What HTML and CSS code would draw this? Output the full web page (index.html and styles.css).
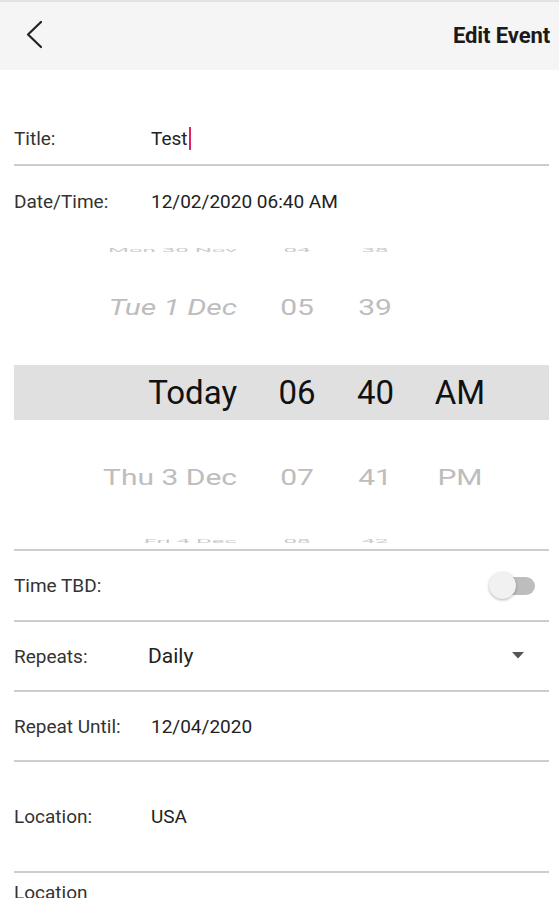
FILE: index.html
```html
<!DOCTYPE html>
<html lang="en">
<head>
<meta charset="utf-8">
<title>Edit Event</title>
<link rel="stylesheet" href="styles.css">
</head>
<body>
<div class="app">
  <header class="topbar">
    <svg class="back" width="20" height="30" viewBox="0 0 20 30" aria-hidden="true">
      <polyline points="16,2 3,14.5 16,27" fill="none" stroke="#222" stroke-width="2.2" stroke-linecap="round" stroke-linejoin="round"/>
    </svg>
    <h1 class="title">Edit Event</h1>
  </header>

  <main class="form">
    <div class="row row-title">
      <span class="label">Title:</span>
      <span class="value">Test<span class="caret"></span></span>
    </div>

    <div class="row row-date">
      <span class="label">Date/Time:</span>
      <span class="value">12/02/2020 06:40 AM</span>
    </div>

    <div class="wheel">
      <div class="wrow far far-top">
        <span class="c-date">Mon 30 Nov</span><span class="c-num">04</span><span class="c-num">38</span><span class="c-ap"></span>
      </div>
      <div class="wrow near">
        <span class="c-date italic">Tue 1 Dec</span><span class="c-num">05</span><span class="c-num">39</span><span class="c-ap"></span>
      </div>
      <div class="wrow selected">
        <span class="c-date">Today</span><span class="c-num">06</span><span class="c-num">40</span><span class="c-ap">AM</span>
      </div>
      <div class="wrow near">
        <span class="c-date">Thu 3 Dec</span><span class="c-num">07</span><span class="c-num">41</span><span class="c-ap">PM</span>
      </div>
      <div class="wrow far far-bottom">
        <span class="c-date">Fri 4 Dec</span><span class="c-num">08</span><span class="c-num">42</span><span class="c-ap"></span>
      </div>
    </div>

    <div class="row row-tbd">
      <span class="label">Time TBD:</span>
      <span class="toggle"><span class="track"></span><span class="thumb"></span></span>
    </div>

    <div class="row row-repeats">
      <span class="label">Repeats:</span>
      <span class="value value-select">Daily</span>
      <svg class="dropdown" width="12" height="7" viewBox="0 0 12 7" aria-hidden="true"><polygon points="0,0 12,0 6,6.5" fill="#555"/></svg>
    </div>

    <div class="row row-until">
      <span class="label">Repeat Until:</span>
      <span class="value">12/04/2020</span>
    </div>

    <div class="row row-location">
      <span class="label">Location:</span>
      <span class="value">USA</span>
    </div>

    <div class="row row-details">
      <span class="label label-wrap">Location Details:</span>
      <span class="value placeholder">Location Details</span>
    </div>
  </main>
</div>
</body>
</html>
```

FILE: styles.css
```css
* { box-sizing: border-box; }

html, body {
  margin: 0;
  padding: 0;
  background: #ffffff;
}

body {
  font-family: Roboto, "Noto Sans", "Liberation Sans", sans-serif;
  color: #222;
  overflow: hidden;
  height: 900px;
}

.app {
  border-top: 2px solid #e2e2e2;
  height: 898px;
  overflow: hidden;
}

.topbar {
  height: 68px;
  background: #f5f5f5;
  display: flex;
  align-items: center;
  justify-content: space-between;
  padding: 0 9px 0 25px;
}

.back {
  display: block;
  margin-top: -2px;
}

.title {
  margin: 0;
  font-size: 22px;
  font-weight: 700;
  color: #1a1a1a;
  letter-spacing: -0.1px;
  margin-top: -1px;
}

.form {
  padding: 44px 10px 0 14px;
}

.row {
  display: flex;
  align-items: center;
  border-bottom: 2px solid #cdcdcd;
  font-size: 19px;
}

.label {
  width: 137px;
  flex: none;
  color: #333;
}

.value {
  color: #222;
}

.row-title { height: 52px; padding-bottom: 2px; }

.caret {
  display: inline-block;
  width: 2px;
  height: 23px;
  background: #e0245e;
  vertical-align: -5px;
  margin-left: 1px;
}

.row-date {
  height: 70px;
  border-bottom: none;
}

/* wheel picker */
.wheel {
  border-bottom: 2px solid #cdcdcd;
  padding-bottom: 4px;
}

.wrow {
  display: grid;
  grid-template-columns: 223px 120px 36px 134px;
  align-items: center;
  white-space: nowrap;
}

.c-date { text-align: right; }
.c-num, .c-ap { text-align: center; }

.wrow span { display: block; }

.selected {
  height: 55px;
  margin: 8px 0;
  background: #e0e0e0;
  font-size: 33px;
  color: #111;
}

.near {
  height: 99px;
  font-size: 30px;
  color: #bdbdbd;
}

.near span { transform: scaleY(0.76); }
.near .c-date { transform-origin: right center; }
.near .italic { font-style: italic; }

.far {
  font-size: 24px;
  color: #cacaca;
}

.far span { transform: scaleY(0.25); }
.far .c-date { transform-origin: right center; }
.far-top { height: 22px; }
.far-bottom { height: 18px; }

/* toggle */
.row-tbd {
  height: 71px;
  justify-content: space-between;
  padding-right: 13px;
}

.toggle {
  position: relative;
  width: 47px;
  height: 28px;
  display: block;
}

.track {
  position: absolute;
  left: 8px;
  top: 5px;
  width: 38px;
  height: 18px;
  border-radius: 9px;
  background: #bdbdbd;
}

.thumb {
  position: absolute;
  left: 0;
  top: 0;
  width: 27px;
  height: 27px;
  border-radius: 50%;
  background: #f1f1f1;
  box-shadow: 0 1px 3px rgba(0,0,0,0.3);
}

.row-repeats {
  height: 70px;
}

.value-select {
  font-size: 21px;
  margin-left: -3px;
  flex: 1;
}

.dropdown {
  display: block;
  margin-right: 25px;
  margin-top: -2px;
}

.row-until { height: 70px; }

.row-location { height: 111px; }

.row-details {
  height: 80px;
  align-items: flex-start;
  padding-top: 9px;
  border-bottom: none;
}

.label-wrap {
  width: 137px;
  padding-right: 50px;
  line-height: 22px;
}

.placeholder {
  color: #d6d6d6;
  margin-top: 18px;
}
```
